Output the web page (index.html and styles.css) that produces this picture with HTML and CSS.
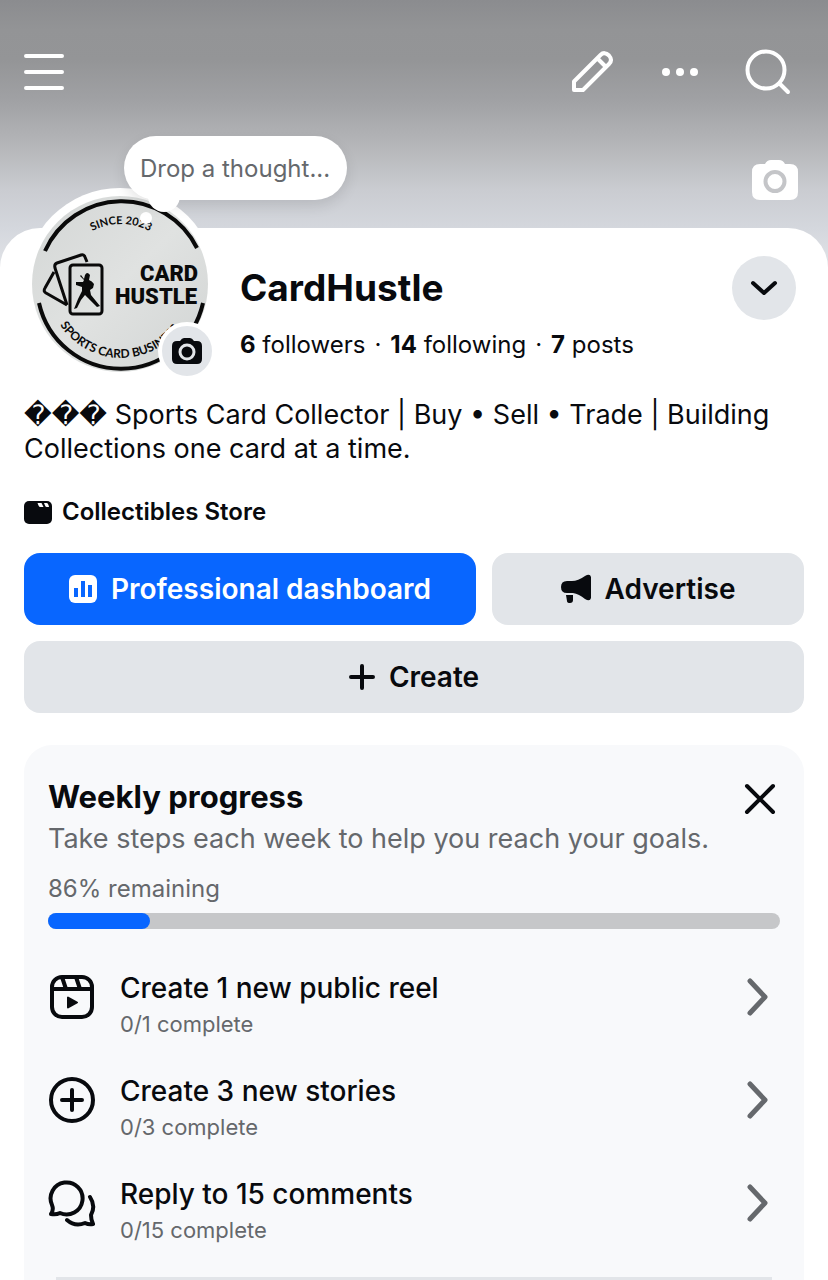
FILE: index.html
```html
<!DOCTYPE html>
<html lang="en">
<head>
  <title>CardHustle</title>
  <meta charset="UTF-8">
  <meta name="viewport" content="width=device-width, initial-scale=1.0">
  <link rel="stylesheet" href="styles.css">
</head>
<body>
<div class="page">
  <header class="topbar">
    <button class="icon-btn" aria-label="Menu">
      <svg width="40" height="40" viewBox="0 0 40 40" stroke="#fff" stroke-width="4" stroke-linecap="round"><path d="M2 4h36M2 20h36M2 36h36"/></svg>
    </button>
    <div class="topbar-actions">
      <button class="icon-btn" aria-label="Edit">
        <svg width="48" height="48" viewBox="0 0 48 48" fill="none" stroke="#fff" stroke-width="4" stroke-linejoin="round"><path d="M6 42V33.500L32.500 7Q36.500 3 41 7.500Q45 12 41 16L15 42Z"/><path d="M29.500 10.500L38 19"/></svg>
      </button>
      <button class="icon-btn" aria-label="More">
        <svg width="48" height="48" viewBox="0 0 48 48" fill="#fff"><circle cx="10" cy="24" r="4"/><circle cx="24" cy="24" r="4"/><circle cx="38" cy="24" r="4"/></svg>
      </button>
      <button class="icon-btn" aria-label="Search">
        <svg width="48" height="48" viewBox="0 0 48 48" fill="none" stroke="#fff" stroke-width="4" stroke-linecap="round"><circle cx="22" cy="22" r="18.500"/><path d="M35.500 35.500L44 44"/></svg>
      </button>
    </div>
  </header>

  <div class="cover-tools">
    <button class="icon-btn" aria-label="Change cover photo">
      <svg width="46" height="40" viewBox="0 0 46 40"><path fill="#fff" d="M8 4h5q2-4 6-4h8q4 0 6 4h5q8 0 8 8v20q0 8-8 8H8q-8 0-8-8V12q0-8 8-8z"/><circle cx="23" cy="21.500" r="9.500" fill="none" stroke="#c4c5c8" stroke-width="4"/></svg>
    </button>
  </div>

  <main class="panel">
    <section class="profile">
      <div class="avatar">
        <svg width="192" height="192" viewBox="0 0 192 192" role="img" aria-label="CardHustle logo">
          <defs>
            <path id="arcTop" d="M36 97A61 61 0 0 1 158 97"/>
            <path id="arcBottom" d="M36 137A73 73 0 0 0 170 97"/>
            <linearGradient id="paper" x1="0" y1="0" x2="1" y2="1"><stop offset="0" stop-color="#d3d6d5"/><stop offset="0.500" stop-color="#e0e2e1"/><stop offset="1" stop-color="#d1d4d3"/></linearGradient>
          </defs>
          <circle cx="96" cy="96" r="96" fill="#fff"/>
          <circle cx="96" cy="96" r="88" fill="url(#paper)"/>
          <g fill="none" stroke="#0a0a0a" stroke-width="4">
            <path d="M21 63A84 84 0 0 1 173 60"/>
            <path d="M15 115A84 84 0 0 0 179 115"/>
          </g>
          <g fill="none" stroke="#0a0a0a" stroke-width="3" stroke-linejoin="round">
            <rect x="46" y="77" width="32" height="49" rx="3"/>
            <path d="M63 74L61 69Q60 66 57 67L33 75Q30 76 31 80L43 117"/>
            <path d="M30 84L21 100Q19 103 22 105L43 117"/>
          </g>
          <path fill="#0a0a0a" d="M57 87l3 4 1-4q2-4 5 0l-1 5q3 1 5 4l-1 4-3 2 1 5 9 11-3 1-9-9-3-3-4 5-4 8-3 1 4-10 4-8v-4l-6-2v-3l7 0 1-2-4-4z"/>
          <text class="logo-name" x="174" y="93" text-anchor="end">CARD</text>
          <text class="logo-name" x="173" y="116" text-anchor="end">HUSTLE</text>
          <text class="logo-arc logo-since"><textPath href="#arcTop" startOffset="50%" text-anchor="middle">SINCE 2023</textPath></text>
          <text class="logo-arc"><textPath href="#arcBottom">SPORTS CARD BUSINESS</textPath></text>
        </svg>
        <span class="thought-tail"></span>
        <span class="thought-dot"></span>
        <button class="thought">Drop a thought...</button>
        <button class="avatar-camera" aria-label="Change profile photo">
          <svg width="30" height="26" viewBox="0 0 30 26"><path fill="#080a0e" d="M5 3h3q2-3 4-3h6q2 0 4 3h3q5 0 5 5v13q0 5-5 5H5q-5 0-5-5V8q0-5 5-5z"/><circle cx="15" cy="14" r="7" fill="none" stroke="#e2e5e9" stroke-width="3"/></svg>
        </button>
      </div>
      <div class="identity">
        <h1>CardHustle</h1>
        <p class="stats"><a href="#"><b>6</b> followers</a><span>·</span><a href="#"><b>14</b> following</a><span>·</span><a href="#"><b>7</b> posts</a></p>
      </div>
      <button class="switch" aria-label="Switch profile">
        <svg width="28" height="16" viewBox="0 0 28 16" fill="none" stroke="#080a0e" stroke-width="4" stroke-linecap="round" stroke-linejoin="round"><path d="M3 3l11 10L25 3"/></svg>
      </button>
    </section>

    <p class="bio">��� Sports Card Collector | Buy • Sell • Trade | Building Collections one card at a time.</p>

    <p class="category">
      <svg width="28" height="24" viewBox="0 0 28 24"><rect width="28" height="23" y="1" rx="5" fill="#080a0e"/><path fill="#fff" d="M13.500 3h4l2 4h-3q-1.500 0-2-1.500zM20 3h2.500q1.500 0 2 2l.5 2H23q-1.500 0-2-1.500z"/></svg>
      Collectibles Store
    </p>

    <div class="actions">
      <button class="btn btn-primary">
        <svg width="28" height="28" viewBox="0 0 28 28"><rect width="28" height="28" rx="6" fill="#fff"/><path fill="#0866ff" d="M5 13h4v9H5zM12 6h4v16h-4zM19 10h4v12h-4z"/></svg>
        Professional dashboard
      </button>
      <button class="btn">
        <svg width="30" height="30" viewBox="0 0 30 30" fill="#080a0e"><path d="M6 7h5q6 0 13-5 5-3 6 1v21q-1 4-6 1-6-5-12-6H6q-6 0-6-6t6-6z"/><path d="M5 21h7v5q0 3-3 3t-3-2z"/></svg>
        Advertise
      </button>
      <button class="btn btn-wide">
        <svg width="26" height="26" viewBox="0 0 26 26" stroke="#080a0e" stroke-width="4" stroke-linecap="round"><path d="M13 2v22M2 13h22"/></svg>
        Create
      </button>
    </div>

    <section class="card">
      <div class="card-head">
        <div>
          <h2>Weekly progress</h2>
          <p class="lead">Take steps each week to help you reach your goals.</p>
        </div>
        <button class="icon-btn close" aria-label="Close">
          <svg width="32" height="32" viewBox="0 0 32 32" stroke="#080a0e" stroke-width="4" stroke-linecap="round"><path d="M3 3l26 26M29 3L3 29"/></svg>
        </button>
      </div>
      <label class="remaining" for="weekly">86% remaining</label>
      <progress id="weekly" max="100" value="14"></progress>

      <ul class="steps">
        <li><a href="#">
          <svg width="48" height="48" viewBox="0 0 48 48" fill="none" stroke="#080a0e" stroke-width="4"><rect x="4" y="4" width="40" height="40" rx="10"/><path d="M4 16h40M14 4l4 12M28 4l4 12"/><path fill="#080a0e" stroke-width="2" stroke-linejoin="round" d="M20 24.500v10l9-5z"/></svg>
          <span class="step-text"><span class="step-title">Create 1 new public reel</span><span class="step-sub">0/1 complete</span></span>
          <svg class="chevron" width="24" height="48" viewBox="0 0 24 48"><path d="M4 8l15 16L4 40"/></svg>
        </a></li>
        <li><a href="#">
          <svg width="48" height="48" viewBox="0 0 48 48" fill="none" stroke="#080a0e" stroke-width="4" stroke-linecap="round"><circle cx="24" cy="24" r="21"/><path d="M24 14v20M14 24h20"/></svg>
          <span class="step-text"><span class="step-title">Create 3 new stories</span><span class="step-sub">0/3 complete</span></span>
          <svg class="chevron" width="24" height="48" viewBox="0 0 24 48"><path d="M4 8l15 16L4 40"/></svg>
        </a></li>
        <li><a href="#">
          <svg width="48" height="48" viewBox="0 0 48 48" fill="none" stroke="#080a0e" stroke-width="4" stroke-linecap="round" stroke-linejoin="round"><path d="M3 35q3-4 1-9A16 16 0 1 1 12 34Q8 36 3 35z"/><path d="M42 18q6 9 1 18 0 5 2 9-4 1-8-1-10 4-18-3"/></svg>
          <span class="step-text"><span class="step-title">Reply to 15 comments</span><span class="step-sub">0/15 complete</span></span>
          <svg class="chevron" width="24" height="48" viewBox="0 0 24 48"><path d="M4 8l15 16L4 40"/></svg>
        </a></li>
      </ul>
      <div class="card-foot"></div>
    </section>
  </main>
</div>
</body>
</html>
```
FILE: styles.css
```css
* {
  box-sizing: border-box;
}
body {
  margin: 0;
  font-family: Inter, "DejaVu Sans", sans-serif;
  color: #080a0e;
  background: #fff;
}
h1, h2, p, ul {
  margin: 0;
  padding: 0;
}
a {
  color: inherit;
  text-decoration: none;
}
button {
  font-family: inherit;
  color: inherit;
  border: 0;
  padding: 0;
  cursor: pointer;
}
svg {
  display: block;
  flex-shrink: 0;
}
.page {
  background: linear-gradient(#8b8c8f 0, #939496 30px, #949597 60px, #a0a1a4 100px, #b7b8bb 150px, #caccd1 190px, #d4d7dd 228px, #e2e4e8 270px);
}
.icon-btn {
  background: none;
}

/* cover */
.topbar {
  display: flex;
  justify-content: space-between;
  align-items: center;
  padding: 48px 36px 0 24px;
}
.topbar-actions {
  display: flex;
  gap: 40px;
}
.cover-tools {
  display: flex;
  justify-content: flex-end;
  padding: 64px 30px 28px;
}

/* profile */
.panel {
  background: #fff;
  border-radius: 40px 40px 0 0;
  padding: 0 24px;
}
.profile {
  display: flex;
  align-items: flex-start;
}
.avatar {
  position: relative;
  margin-top: -40px;
}
.logo-name {
  font: 900 22px Roboto, sans-serif;
  fill: #0a0a0a;
}
.logo-arc {
  font: bold 12px Lato, sans-serif;
  fill: #0a0a0a;
}
.logo-since {
  font-size: 11px;
}
.thought {
  position: absolute;
  left: 100px;
  top: -52px;
  height: 64px;
  padding: 0 17px 0 16px;
  border-radius: 32px;
  background: #fff;
  color: #65686c;
  font-size: 24px;
  white-space: nowrap;
  box-shadow: 0 6px 14px rgba(0,0,0,0.1);
}
.thought-tail {
  position: absolute;
  left: 124px;
  top: -8px;
  width: 32px;
  height: 32px;
  border-radius: 50%;
  background: #fff;
  z-index: 1;
}
.thought-dot {
  position: absolute;
  left: 116px;
  top: 24px;
  width: 12px;
  height: 12px;
  border-radius: 50%;
  background: #fff;
}
.avatar-camera {
  position: absolute;
  left: 134px;
  top: 134px;
  width: 58px;
  height: 58px;
  display: flex;
  align-items: center;
  justify-content: center;
  border: 4px solid #fff;
  border-radius: 50%;
  background: #e2e5e9;
}
.identity {
  flex: 1;
  padding: 36px 0 0 24px;
}
h1 {
  font-size: 37px;
  line-height: 48px;
}
.stats {
  display: flex;
  gap: 9px;
  margin-top: 17px;
  font-size: 24px;
  line-height: 32px;
}
.switch {
  width: 64px;
  height: 64px;
  margin: 28px 8px 0 0;
  display: flex;
  align-items: center;
  justify-content: center;
  border-radius: 50%;
  background: #e2e5e9;
}
.bio {
  margin-top: 18px;
  font-size: 27px;
  line-height: 34px;
}
.category {
  display: flex;
  align-items: center;
  gap: 10px;
  margin-top: 30px;
  font-size: 24px;
  line-height: 32px;
  font-weight: 600;
}

/* buttons */
.actions {
  display: grid;
  grid-template-columns: 452fr 312fr;
  gap: 16px;
  margin-top: 25px;
}
.btn {
  display: flex;
  align-items: center;
  justify-content: center;
  gap: 14px;
  height: 72px;
  border-radius: 16px;
  background: #e2e5e9;
  font-size: 28px;
  font-weight: 600;
}
.btn-primary {
  background: #0866ff;
  color: #fff;
}
.btn-wide {
  grid-column: 1 / -1;
}

/* weekly progress */
.card {
  margin-top: 32px;
  padding: 32px 24px 0;
  border-radius: 28px 28px 0 0;
  background: #f8f9fb;
}
.card-head {
  display: flex;
  justify-content: space-between;
  align-items: flex-start;
}
h2 {
  font-size: 31px;
  line-height: 40px;
}
.lead {
  color: #65686c;
  font-size: 27px;
  line-height: 44px;
}
.close {
  margin: 6px 4px 0 0;
}
.remaining {
  display: block;
  margin-top: 12px;
  color: #65686c;
  font-size: 24px;
  line-height: 32px;
}
progress {
  display: block;
  width: 100%;
  height: 16px;
  margin-top: 8px;
  appearance: none;
  border: 0;
}
progress::-webkit-progress-bar {
  background: #c6c7c9;
  border-radius: 8px;
}
progress::-webkit-progress-value {
  background: #0866ff;
  border-radius: 8px;
}
.steps {
  list-style: none;
  padding-top: 39px;
}
.steps a {
  display: flex;
  align-items: flex-start;
  gap: 24px;
  padding-right: 10px;
  margin-bottom: 31px;
}
.steps svg {
  margin-top: 5px;
}
.step-text {
  flex: 1;
  display: flex;
  flex-direction: column;
}
.step-title {
  font-size: 28px;
  line-height: 40px;
  font-weight: 500;
}
.step-sub {
  color: #65686c;
  font-size: 22px;
  line-height: 32px;
}
.chevron {
  fill: none;
  stroke: #65686c;
  stroke-width: 5;
  stroke-linecap: round;
  stroke-linejoin: round;
}
.card-foot {
  height: 3px;
  margin: 0 8px;
  background: #e2e5e9;
}
```
